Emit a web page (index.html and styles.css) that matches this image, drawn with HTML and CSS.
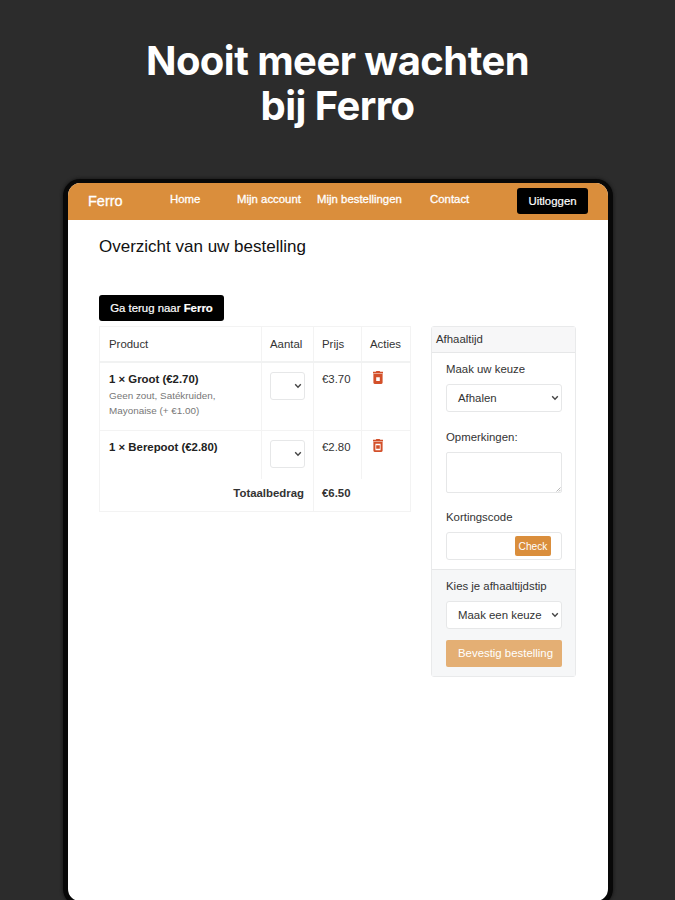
FILE: index.html
```
<!DOCTYPE html>
<html lang="nl">
<head>
    <meta charset="UTF-8">
    <meta name="viewport" content="width=device-width, initial-scale=1.0">
    <title>Ferro - Overzicht van uw bestelling</title>
    <link rel="stylesheet" href="styles.css">
</head>
<body>
    <h1 class="promo-title">Nooit meer wachten<br>bij Ferro</h1>

    <div class="device">
        <nav class="navbar">
            <a class="brand">Ferro</a>
            <a class="nav-link">Home</a>
            <a class="nav-link">Mijn account</a>
            <a class="nav-link">Mijn bestellingen</a>
            <a class="nav-link">Contact</a>
            <button class="btn logout">Uitloggen</button>
        </nav>

        <div class="page">
            <h2>Overzicht van uw bestelling</h2>

            <div class="content">
                <div class="order">
                    <button class="btn back">Ga terug naar <b>Ferro</b></button>
                    <table class="order-table">
                        <colgroup>
                            <col class="col-product">
                            <col class="col-amount">
                            <col class="col-price">
                            <col class="col-actions">
                        </colgroup>
                        <tr class="row-head">
                            <th>Product</th>
                            <th>Aantal</th>
                            <th>Prijs</th>
                            <th>Acties</th>
                        </tr>
                        <tr class="row-first">
                            <td>
                                <div class="product-name">1 × Groot (€2.70)</div>
                                <div class="product-extra">Geen zout, Satékruiden,<br>Mayonaise (+ €1.00)</div>
                            </td>
                            <td>
                                <div class="select small">
                                    <svg class="chevron" viewBox="0 0 8 6"><path d="M1.2 1.3 4 4.2 6.8 1.3"/></svg>
                                </div>
                            </td>
                            <td>€3.70</td>
                            <td>
                                <svg class="trash" viewBox="0 0 10 13"><path fill-rule="evenodd" d="M0 .8h2.7L3.4 0h3.2l.7.8H10v1.7H0zM.4 3.1h9.2v8.5c0 .8-.5 1.4-1.3 1.4H1.7c-.8 0-1.3-.6-1.3-1.4zM3.2 6.2v3.7h3.6V6.2z"/></svg>
                            </td>
                        </tr>
                        <tr class="row-second">
                            <td>
                                <div class="product-name">1 × Berepoot (€2.80)</div>
                            </td>
                            <td>
                                <div class="select small">
                                    <svg class="chevron" viewBox="0 0 8 6"><path d="M1.2 1.3 4 4.2 6.8 1.3"/></svg>
                                </div>
                            </td>
                            <td>€2.80</td>
                            <td>
                                <svg class="trash" viewBox="0 0 10 13"><path fill-rule="evenodd" d="M0 .8h2.7L3.4 0h3.2l.7.8H10v1.7H0zM.4 3.1h9.2v8.5c0 .8-.5 1.4-1.3 1.4H1.7c-.8 0-1.3-.6-1.3-1.4zM2.4 4.7v6.5h5.2V4.7zM3.2 6.2h3.6v3.6H3.2z"/></svg>
                            </td>
                        </tr>
                        <tr class="row-total">
                            <td colspan="2">Totaalbedrag</td>
                            <td colspan="2">€6.50</td>
                        </tr>
                    </table>
                </div>

                <div class="card">
                    <div class="card-header">Afhaaltijd</div>
                    <div class="card-body">
                        <label>Maak uw keuze</label>
                        <div class="select">
                            <span>Afhalen</span>
                            <svg class="chevron" viewBox="0 0 8 6"><path d="M1.2 1.3 4 4.2 6.8 1.3"/></svg>
                        </div>
                        <label>Opmerkingen:</label>
                        <div class="textarea">
                            <svg class="grip" viewBox="0 0 5 5"><path d="M.5 4.5l4-4M2.8 4.5l1.7-1.7"/></svg>
                        </div>
                        <label>Kortingscode</label>
                        <div class="coupon"><button class="check">Check</button></div>
                    </div>
                    <div class="card-footer">
                        <label>Kies je afhaaltijdstip</label>
                        <div class="select">
                            <span>Maak een keuze</span>
                            <svg class="chevron" viewBox="0 0 8 6"><path d="M1.2 1.3 4 4.2 6.8 1.3"/></svg>
                        </div>
                        <button class="confirm">Bevestig bestelling</button>
                    </div>
                </div>
            </div>
        </div>
    </div>
</body>
</html>
```
FILE: styles.css
```
* {
    box-sizing: border-box;
}

body {
    margin: 0;
    height: 900px;
    overflow: hidden;
    background-color: #2c2c2c;
    font-family: "Liberation Sans", Arial, sans-serif;
    font-size: 11.4px;
    color: #333;
}

button {
    font-family: inherit;
    border: none;
    padding: 0;
}

.promo-title {
    margin: 0;
    padding-top: 38px;
    height: 179px;
    font-family: Inter, sans-serif;
    font-size: 40px;
    line-height: 45px;
    font-weight: 700;
    letter-spacing: -0.55px;
    text-align: center;
    color: #fff;
}

/* Tablet */
.device {
    width: 550px;
    height: 727px;
    margin: 0 0 0 63px;
    border: 5px solid #080808;
    border-top-width: 4px;
    border-radius: 17px;
    background-color: #fff;
    box-shadow: 0 0 3px 1px #1c1c1c;
    overflow: hidden;
}

.navbar {
    display: grid;
    grid-template-columns: 82px 67px 80px 113px 87px 71px;
    align-items: center;
    height: 37px;
    padding-left: 20px;
    background-color: #da8e3c;
    color: #fff;
    white-space: nowrap;
}

.brand {
    padding-bottom: 2px;
    font-size: 14.5px;
    -webkit-text-stroke: 0.3px #fff;
}

.nav-link {
    padding-bottom: 5px;
    -webkit-text-stroke: 0.3px #fff;
}

.btn {
    height: 26px;
    background-color: #000;
    border-radius: 3px;
    color: #fff;
    font-size: 11.4px;
    -webkit-text-stroke: 0.2px #fff;
}

.logout {
    margin-bottom: 1px;
}

.page {
    padding: 0 32px 0 31px;
}

h2 {
    margin: 0;
    padding-top: 17px;
    height: 75px;
    font-size: 17px;
    line-height: 20px;
    font-weight: normal;
    color: #111;
}

.content {
    display: flex;
    justify-content: space-between;
    align-items: flex-start;
}

.back {
    display: block;
    width: 125px;
}

/* Order table */
.order-table {
    width: 311px;
    margin-top: 5px;
    border-collapse: collapse;
    table-layout: fixed;
}

.col-product {
    width: 162px;
}

.col-amount {
    width: 52px;
}

.col-price {
    width: 48px;
}

.col-actions {
    width: 49px;
}

.order-table th,
.order-table td {
    padding: 9px 0 0 8px;
    border: 1px solid #f3f3f3;
    line-height: 15px;
    font-weight: normal;
    text-align: left;
    vertical-align: top;
}

.row-head {
    height: 35px;
}

.order-table .row-head th {
    padding-top: 10px;
    border-bottom: 2px solid #f1f2f2;
}

.order-table th:first-child,
.order-table td:first-child {
    padding-left: 9px;
}

.row-first {
    height: 69px;
}

.row-second {
    height: 48px;
}

.order-table .row-second td {
    border-bottom: none;
}

.row-total {
    height: 33px;
}

.order-table .row-total td {
    padding-top: 7px;
    border-top: none;
    font-weight: bold;
}

.order-table .row-total td:first-child {
    padding-right: 9px;
    text-align: right;
}

.product-name {
    font-weight: bold;
    color: #222;
}

.product-extra {
    padding-top: 1px;
    font-size: 9.9px;
    color: #777;
}

.trash {
    display: block;
    width: 10px;
    height: 13px;
    margin: -1px 0 0 3px;
    fill: #d3502a;
}

/* Form fields */
.select {
    display: flex;
    align-items: center;
    justify-content: space-between;
    height: 28px;
    padding: 0 2px 0 11px;
    border: 1px solid #e6e7e8;
    border-radius: 3px;
    background-color: #fff;
    white-space: nowrap;
}

.select.small {
    justify-content: flex-end;
    width: 35px;
}

.chevron {
    width: 8px;
    height: 6px;
    fill: none;
    stroke: #444;
    stroke-width: 1.4;
}

/* Pickup card */
.card {
    width: 145px;
    height: 351px;
    margin-top: 31px;
    border: 1px solid #e9eaeb;
    border-radius: 3px;
}

.card-header {
    height: 26px;
    padding-left: 4px;
    line-height: 25px;
    background-color: #f7f7f8;
    border-bottom: 1px solid #e6e7e8;
}

.card-body {
    height: 216px;
    padding: 9px 13px 0 14px;
}

.card label {
    display: block;
    height: 22px;
    line-height: 15px;
}

.card-body .select {
    margin-bottom: 18px;
}

.textarea {
    display: flex;
    justify-content: flex-end;
    align-items: flex-end;
    height: 41px;
    margin-bottom: 17px;
    border: 1px solid #e6e7e8;
    border-radius: 2px;
}

.grip {
    width: 5px;
    height: 5px;
    stroke: #999;
    stroke-width: 0.7;
}

.coupon {
    display: flex;
    justify-content: flex-end;
    align-items: center;
    height: 28px;
    padding-right: 10px;
    border: 1px solid #e6e7e8;
    border-radius: 3px;
}

.check {
    width: 36px;
    height: 20px;
    background-color: #da8e3c;
    border-radius: 2px;
    color: #fff;
    font-size: 10.2px;
}

.card-footer {
    height: 107px;
    padding: 9px 13px 0 14px;
    background-color: #f6f7f8;
    border-top: 1px solid #e6e7e8;
}

.confirm {
    display: block;
    width: 100%;
    height: 27px;
    margin-top: 11px;
    padding: 0 0 1px 3px;
    background-color: #e4af74;
    border-radius: 2px;
    color: #fff;
    font-size: 11.4px;
}
```
